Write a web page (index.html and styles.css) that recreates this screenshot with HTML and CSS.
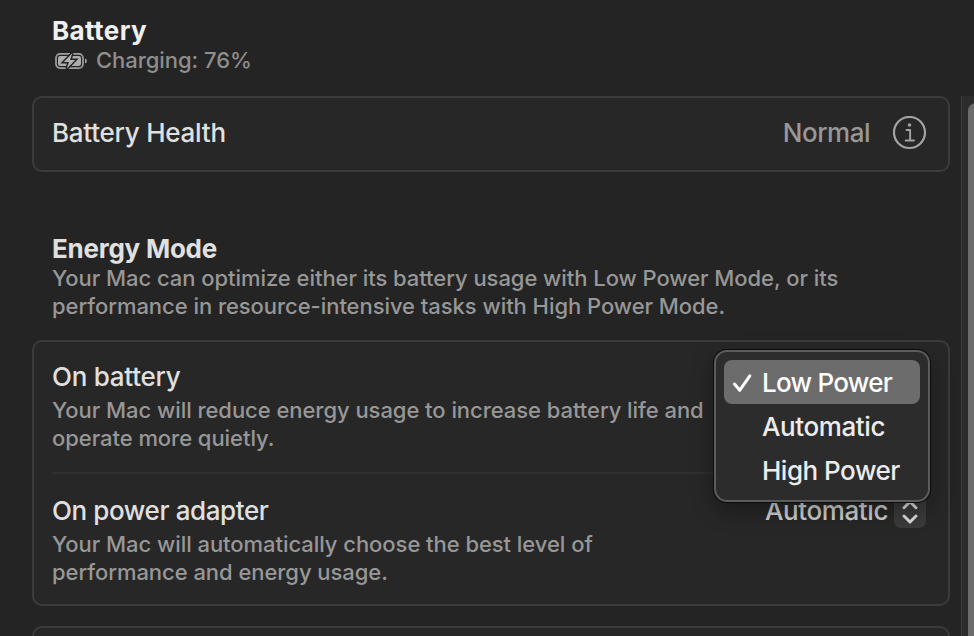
FILE: index.html
```html
<!DOCTYPE html>
<html lang="en">
<head>
    <meta charset="UTF-8">
    <meta name="viewport" content="width=device-width, initial-scale=1.0">
    <title>Battery</title>
    <link rel="stylesheet" href="styles.css">
</head>
<body>
    <header class="header">
        <h1 class="title">Battery</h1>
        <div class="status">
            <svg class="battery-icon" width="34" height="18" viewBox="0 0 34 18">
                <rect x="2" y="1.8" width="27" height="14.4" rx="4.2" fill="none" stroke="#a0a0a0" stroke-width="1.7"/>
                <rect x="4" y="4" width="23" height="10" rx="2.2" fill="#adadad"/>
                <path d="M31 6.5v5c1.2-.4 1.9-1.3 1.9-2.5s-.7-2.1-1.9-2.5z" fill="#a0a0a0"/>
                <path d="M18.3 1.2L9.8 10.1h5.2l-2.3 6.7 8.5-8.900h-5.2z" fill="#b4b4b4" stroke="#242424" stroke-width="3" paint-order="stroke"/>
            </svg>
            <span class="charging">Charging: 76%</span>
        </div>
    </header>

    <div class="pane">
        <main class="content">
            <section class="card health">
                <span class="label">Battery Health</span>
                <span class="value">Normal</span>
                <svg class="info-icon" width="34" height="34" viewBox="0 0 34 34" fill="none" stroke="#a3a3a3">
                    <circle cx="16.5" cy="16.5" r="15.5" stroke-width="2.2"/>
                    <circle cx="16.5" cy="9" r="1.8" fill="#a3a3a3" stroke="none"/>
                    <path d="M13.5 14h3.6v10.500M12.700 24.500h8.300" stroke-width="1.9" stroke-linecap="round" stroke-linejoin="round"/>
                </svg>
            </section>

            <section class="intro">
                <h2 class="heading">Energy Mode</h2>
                <p class="desc">Your Mac can optimize either its battery usage with Low Power Mode, or its<br>performance in resource-intensive tasks with High Power Mode.</p>
            </section>

            <section class="card modes">
                <div class="row">
                    <span class="label">On battery</span>
                    <p class="desc">Your Mac will reduce energy usage to increase battery life and<br>operate more quietly.</p>
                </div>
                <div class="row adapter">
                    <div class="row-text">
                        <span class="label">On power adapter</span>
                        <p class="desc">Your Mac will automatically choose the best level of<br>performance and energy usage.</p>
                    </div>
                    <div class="picker">
                        <span class="picker-value">Automatic</span>
                        <span class="stepper">
                            <svg width="32" height="32" viewBox="0 0 32 32" fill="none" stroke="#dcdcdc" stroke-width="2.9" stroke-linecap="round" stroke-linejoin="round">
                                <path d="M10 12.800l6-6 6 6M10 21l6 6 6-6"/>
                            </svg>
                        </span>
                    </div>
                </div>

                <!-- Energy mode popup -->
                <ul class="menu">
                    <li class="item selected">
                        <svg class="check" width="20" height="20" viewBox="0 0 20 20" fill="none" stroke="#fff" stroke-width="3" stroke-linecap="round" stroke-linejoin="round">
                            <path d="M2.500 11l5.200 6.300L17.800 2.800"/>
                        </svg>
                        <span>Low Power</span>
                    </li>
                    <li class="item"><span>Automatic</span></li>
                    <li class="item"><span>High Power</span></li>
                </ul>
            </section>

            <section class="card next"></section>
        </main>
        <div class="scrollbar"><div class="thumb"></div></div>
    </div>
</body>
</html>
```

FILE: styles.css
```css
* {
    margin: 0;
    padding: 0;
    box-sizing: border-box;
}
body {
    display: flex;
    flex-direction: column;
    height: 636px;
    overflow: hidden;
    background: #242424;
    color: #e0e0e0;
    font-family: Inter, "Liberation Sans", sans-serif;
    font-size: 26px;
    font-weight: 450;
    letter-spacing: -0.25px;
    line-height: 32px;
    white-space: nowrap;
}
.header {
    flex: none;
    height: 96px;
    padding: 15px 52px 0;
}
.title {
    font-size: 26px;
    font-weight: 750;
    letter-spacing: 0.4px;
    color: #f0f0f0;
}
.status {
    display: flex;
    align-items: center;
    gap: 8px;
    height: 27px;
    padding-left: 2px;
    color: #8e8e8e;
    font-size: 22px;
    letter-spacing: -0.05px;
    line-height: 27px;
}
.pane {
    display: flex;
    flex: 1;
    min-height: 0;
}
.content {
    flex: 1;
    overflow: hidden;
    padding: 0 11px 0 32px;
}
.card {
    background: #272727;
    border: 2px solid #3b3b3b;
    border-radius: 10px;
}
.health {
    display: flex;
    align-items: center;
    height: 76px;
    padding: 0 21px 3px 18px;
}
.value {
    margin-left: auto;
    margin-right: 23px;
    letter-spacing: -0.5px;
    color: #989898;
}
.intro {
    padding: 61px 20px 0;
}
.heading {
    height: 31px;
    font-size: 26px;
    font-weight: 700;
}
.desc {
    color: #979797;
    font-size: 22px;
    letter-spacing: -0.05px;
    line-height: 28px;
}
.modes {
    position: relative;
    height: 266px;
    margin-top: 20px;
    padding: 19px 22px 0 18px;
}
.label {
    display: block;
}
.row .label {
    margin-bottom: 3px;
}
.adapter {
    display: flex;
    justify-content: space-between;
    margin-top: 20px;
    padding-top: 21px;
    border-top: 2px solid #303030;
}
.adapter .label {
    letter-spacing: -0.4px;
}
.picker {
    display: flex;
    gap: 6px;
    color: #cfcfcf;
    letter-spacing: -0.4px;
}
.stepper {
    display: flex;
    width: 32px;
    height: 33px;
    background: #3a3a3a;
    border-radius: 7px;
}
.menu {
    position: absolute;
    top: 8px;
    right: 18px;
    width: 216px;
    height: 152px;
    padding: 8px;
    list-style: none;
    background: #2c2c2c;
    border: 2px solid #5c5c5c;
    border-radius: 13px;
    box-shadow: 0 0 0 1px #0c0c0c, 0 8px 22px rgba(0, 0, 0, 0.35);
    color: #ececec;
}
.item {
    display: flex;
    align-items: center;
    height: 44px;
    padding: 2px 0 0 38px;
    border-radius: 8px;
    letter-spacing: -0.5px;
}
.item:nth-child(2) {
    letter-spacing: -0.4px;
}
.selected {
    padding-left: 8px;
    gap: 10px;
    background: #6c6c6c;
    color: #fff;
    letter-spacing: -0.75px;
}
.next {
    height: 60px;
    margin-top: 20px;
}
.scrollbar {
    overflow: hidden;
    width: 13px;
    padding: 7px 0 0 6px;
    background: #2d2d2d;
    border-left: 1px solid #3e3e3e;
}
.thumb {
    width: 16px;
    height: 560px;
    background: #6c6c6c;
    border-radius: 8px 0 0 0;
}
```
